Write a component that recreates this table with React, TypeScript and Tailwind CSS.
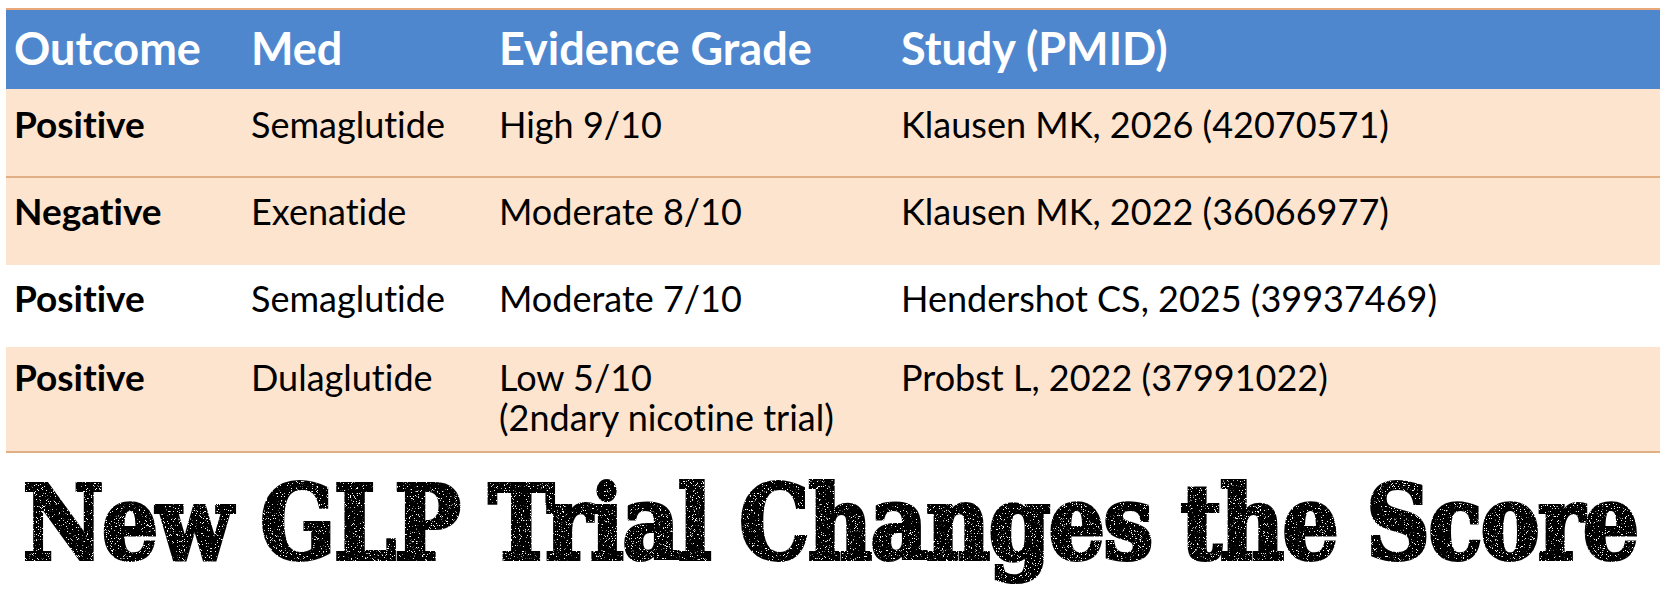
import React from "react";

const rows = [
  { outcome: "Positive", med: "Semaglutide", grade: ["High 9/10"], study: "Klausen MK, 2026 (42070571)", bg: "bg-[#fce4cf]", h: "h-[89px]", pt: "pt-[15px]", border: true },
  { outcome: "Negative", med: "Exenatide", grade: ["Moderate 8/10"], study: "Klausen MK, 2022 (36066977)", bg: "bg-[#fce4cf]", h: "h-[87px]", pt: "pt-[13px]", border: false },
  { outcome: "Positive", med: "Semaglutide", grade: ["Moderate 7/10"], study: "Hendershot CS, 2025 (39937469)", bg: "bg-white", h: "h-[82px]", pt: "pt-[13px]", border: false },
  { outcome: "Positive", med: "Dulaglutide", grade: ["Low 5/10", "(2ndary nicotine trial)"], study: "Probst L, 2022 (37991022)", bg: "bg-[#fce4cf]", h: "h-[106px]", pt: "pt-[10px]", border: true },
];

export default function App() {
  return (
    <div className="w-[1668px] h-[615px] bg-white overflow-hidden font-['Lato','Open_Sans',sans-serif] [font-variant-ligatures:none]">
      <svg width="0" height="0" className="absolute">
        <filter id="grunge" x="0" y="0" width="100%" height="100%">
          <feTurbulence type="fractalNoise" baseFrequency="1.4" numOctaves="2" seed="7" result="noise" />
          <feColorMatrix in="noise" type="matrix" values="0 0 0 0 0  0 0 0 0 0  0 0 0 0 0  -16 0 0 0 11.2" result="mask" />
          <feComposite in="SourceGraphic" in2="mask" operator="in" />
        </filter>
      </svg>
      <div className="pt-[8px] pl-[6px] w-[1660px]">
        <div className="border-t-2 border-[#e9a77a] bg-[#4f87cf] h-[81px] grid grid-cols-[237px_248px_402px_1fr] items-start pt-[12px] text-white font-bold text-[45px] leading-[52px]">
          <div className="pl-[8px]">Outcome</div>
          <div className="pl-[8px]">Med</div>
          <div className="pl-[8px]">Evidence Grade</div>
          <div className="pl-[8px]">Study (PMID)</div>
        </div>
        {rows.map((r, i) => (
          <div
            key={i}
            className={`${r.bg} ${r.h} ${r.pt} ${r.border ? "border-b-2 border-[#e2ae84]" : ""} grid grid-cols-[237px_248px_402px_1fr] items-start text-black text-[36px] leading-[40px]`}
          >
            <div className="pl-[8px] font-bold text-[37px]">{r.outcome}</div>
            <div className="pl-[8px]">{r.med}</div>
            <div className="pl-[8px]">
              {r.grade.map((g, j) => (
                <div key={j}>{g}</div>
              ))}
            </div>
            <div className="pl-[8px]">{r.study}</div>
          </div>
        ))}
      </div>
      <div className="pl-[23px] pt-[15px]">
        <div className="w-max origin-left scale-x-[0.95] font-['DejaVu_Serif_Condensed','DejaVu_Serif',serif] [font-stretch:semi-condensed] font-bold text-[103px] leading-[110px] tracking-[-1.5px] text-black whitespace-nowrap [-webkit-text-stroke:4px_black] [filter:url(#grunge)]">
          New GLP Trial Changes the Score
        </div>
      </div>
    </div>
  );
}
